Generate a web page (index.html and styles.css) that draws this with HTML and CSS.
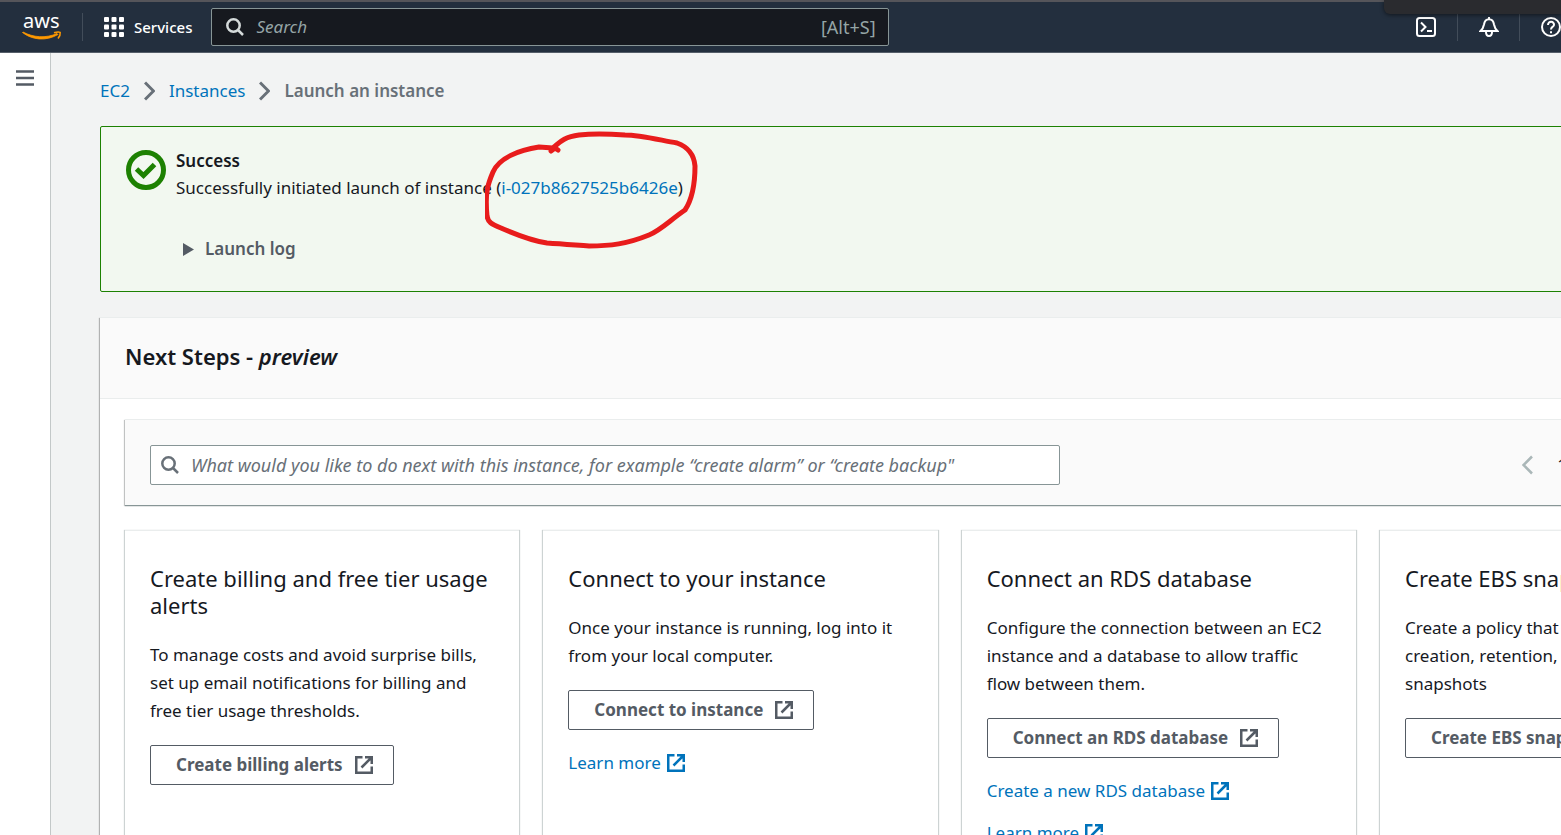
FILE: index.html
```html
<!DOCTYPE html>
<html lang="en">
<head>
<meta charset="utf-8">
<title>Launch an instance | EC2</title>
<link rel="stylesheet" href="styles.css">
</head>
<body>
<svg class="sprite" aria-hidden="true">
  <symbol id="external" viewBox="0 0 18 18"><path d="M7.500 1.250H1.250V16.750H16.750V10.500" /><path d="M10 1.250H16.750V8M16.500 1.500L6.500 11.500" /></symbol>
  <symbol id="search" viewBox="0 0 18 18"><circle cx="7.500" cy="7.500" r="6.200" /><path d="M12 12L17 17" /></symbol>
  <symbol id="chevron" viewBox="0 0 11 20"><path d="M1 1.500L9.500 10L1 18.500" /></symbol>
</svg>
<header class="topbar">
  <a class="logo" href="#" aria-label="AWS home">
    <svg width="40" height="32" viewBox="0 -4 40 32"><text x="1" y="13" class="logo-text">aws</text><path d="M.5 17.500C10 25 24 26.500 36 19.500L35 18.500C24 23.500 11 22.500 1 17Z" fill="#ff9900" stroke="#ff9900" stroke-width=".8"/><path d="M32 17.800C35 16.800 37 16.800 38.200 17.400C38.500 19.200 37.500 21.700 36 23.500" fill="none" stroke="#ff9900" stroke-width="1.500"/></svg>
  </a>
  <span class="rule"></span>
  <button class="services" type="button">
    <svg class="grid-icon" width="20" height="20" viewBox="0 0 20 20"><rect width="5" height="5" rx="1"/><rect x="7.500" width="5" height="5" rx="1"/><rect x="15" width="5" height="5" rx="1"/><rect y="7.500" width="5" height="5" rx="1"/><rect x="7.500" y="7.500" width="5" height="5" rx="1"/><rect x="15" y="7.500" width="5" height="5" rx="1"/><rect y="15" width="5" height="5" rx="1"/><rect x="7.500" y="15" width="5" height="5" rx="1"/><rect x="15" y="15" width="5" height="5" rx="1"/></svg>
    Services
  </button>
  <label class="global-search">
    <svg class="icon"><use href="#search"/></svg>
    <input type="search" placeholder="Search" aria-label="Search">
    <span class="shortcut">[Alt+S]</span>
  </label>
  <nav class="actions" aria-label="Tools">
    <button type="button" aria-label="CloudShell"><svg width="20" height="20" viewBox="0 0 20 20"><rect x="1" y="1" width="18" height="18" rx="2.500"/><path d="M5 5.500L9.500 10L5 14.500M11 14H16"/></svg></button>
    <button type="button" aria-label="Notifications"><svg width="20" height="20" viewBox="0 0 20 20"><path d="M1.500 14H18.500C16 12 15.500 10 15 7.500C14.500 4 12.500 2.300 10 2.300S5.500 4 5 7.500C4.500 10 4 12 1.500 14ZM10 2.300V0M7 15C7 17.500 8 19 10 19S13 17.500 13 15"/></svg></button>
    <button type="button" aria-label="Help"><svg width="20" height="20" viewBox="0 0 20 20"><circle cx="10" cy="10" r="9"/><path d="M7 8C7 3.500 13.500 4 13 8C12.800 9.800 10 9.600 10 12.500M10 14.200V16.200"/></svg></button>
  </nav>
  <div class="screen-bar"></div>
</header>
<div class="shell">
  <aside class="side"><button type="button" aria-label="Open navigation"><svg width="18" height="16" viewBox="0 0 18 16"><path d="M0 1.500H18M0 8H18M0 14.500H18"/></svg></button></aside>
  <main class="main">
    <nav class="crumbs" aria-label="Breadcrumbs">
      <a href="#">EC2</a><svg class="chev"><use href="#chevron"/></svg><a href="#">Instances</a><svg class="chev"><use href="#chevron"/></svg><strong>Launch an instance</strong>
    </nav>
    <section class="alert">
      <svg class="ok" width="40" height="40" viewBox="0 0 40 40"><circle cx="20" cy="20" r="17.500" stroke-width="5"/><path d="M10.500 19L17.500 25.500L28.500 14.500" stroke-width="5"/></svg>
      <div class="alert-body">
        <h2>Success</h2>
        <p>Successfully initiated launch of instance (<a href="#">i-027b8627525b6426e</a>)</p>
        <button class="log" type="button"><svg width="11" height="13" viewBox="0 0 11 13"><path d="M0 0L11 6.500L0 13Z"/></svg>Launch log</button>
      </div>
      <svg class="scribble" width="216" height="122" viewBox="0 0 216 122"><path d="M73 20L70 18L66 21L68 18L54 17C34 20 14 28 8 42C2 56 0 64 2 86C3 92 6 94 16 98C32 105 48 111 62 113C78 114 90 115 104 116C125 116 142 114 164 105C176 100 184 91 200 80C208 68 210 51 210 36C209 24 203 17 192 13C170 9 154 5 140 5C124 4 104 4 94 5C78 7 74 13 69 17" /></svg>
    </section>
    <section class="panel">
      <header class="panel-head"><h1>Next Steps - <em>preview</em></h1></header>
      <div class="panel-body">
        <div class="toolbar">
          <label class="find"><svg class="icon"><use href="#search"/></svg><input type="search" aria-label="Find next step" placeholder="What would you like to do next with this instance, for example “create alarm” or “create backup&quot;"></label>
          <div class="pager"><button type="button" aria-label="Previous page"><svg class="chev back"><use href="#chevron"/></svg></button><span>1</span></div>
        </div>
        <div class="cards">
          <article class="card">
            <h3>Create billing and free tier usage alerts</h3>
            <p>To manage costs and avoid surprise bills, set up email notifications for billing and free tier usage thresholds.</p>
            <button class="btn" type="button">Create billing alerts <svg class="icon"><use href="#external"/></svg></button>
          </article>
          <article class="card">
            <h3>Connect to your instance</h3>
            <p>Once your instance is running, log into it from your local computer.</p>
            <button class="btn" type="button">Connect to instance <svg class="icon"><use href="#external"/></svg></button>
            <a class="more" href="#">Learn more <svg class="icon"><use href="#external"/></svg></a>
          </article>
          <article class="card">
            <h3>Connect an RDS database</h3>
            <p>Configure the connection between an EC2 instance and a database to allow traffic flow between them.</p>
            <button class="btn" type="button">Connect an RDS database <svg class="icon"><use href="#external"/></svg></button>
            <a class="more" href="#">Create a new RDS database <svg class="icon"><use href="#external"/></svg></a>
            <a class="more" href="#">Learn more <svg class="icon"><use href="#external"/></svg></a>
          </article>
          <article class="card">
            <h3>Create EBS snapshot policy</h3>
            <p>Create a policy that automates the creation, retention, and deletion of EBS snapshots</p>
            <button class="btn" type="button">Create EBS snapshot policy <svg class="icon"><use href="#external"/></svg></button>
          </article>
        </div>
      </div>
    </section>
  </main>
</div>
</body>
</html>
```
FILE: styles.css
```css
* { box-sizing: border-box; }
html, body { height: 100%; }
body { margin: 0; overflow: hidden; display: flex; flex-direction: column; background: #f2f3f3; color: #16191f; font: 17px/28px "Noto Sans", sans-serif; }
h1, h2, h3, p { margin: 0; }
a { color: #0073bb; text-decoration: none; }
button, input { font: inherit; color: inherit; background: none; border: 0; padding: 0; margin: 0; }
input { outline: 0; min-width: 0; flex: 1; }
svg { display: block; flex: none; fill: none; }
.sprite { position: absolute; width: 0; height: 0; }
.icon { width: 18px; height: 18px; stroke: currentColor; stroke-width: 2.5; }
.chev { width: 11px; height: 20px; stroke: #687078; stroke-width: 3; }

.topbar { position: relative; flex: none; display: flex; align-items: center; height: 53px; padding-left: 22px; background: #232f3e; color: #fff; border-top: 2px solid #55555a; border-bottom: 1px solid #555e69; }
.logo-text { font: 400 20px "Noto Sans", sans-serif; fill: #fff; }
.rule { width: 1px; height: 28px; margin: 0 21px 0 20px; background: #424d5a; }
.services { display: flex; align-items: center; gap: 10px; font-size: 15px; font-weight: 500; }
.grid-icon { fill: #fff; }
.global-search { display: flex; align-items: center; gap: 12px; width: 44%; height: 38px; margin-left: 19px; padding: 0 12px 0 14px; background: #16191f; border: 1px solid #879596; border-radius: 2px; }
.global-search .icon { stroke: #d5dbdb; }
.global-search input::placeholder { color: #95a5a6; opacity: 1; font-style: italic; }
.shortcut { color: #95a5a6; font-size: 18px; }
.actions { display: flex; margin: 0 -20px 0 auto; }
.actions button { display: grid; place-items: center; width: 62px; height: 28px; border-left: 1px solid #424d5a; }
.actions button:first-child { border-left: 0; }
.actions svg { stroke: #fff; stroke-width: 2; }
.screen-bar { position: absolute; top: -2px; right: 0; width: 177px; height: 14px; background: #2a2b2f; border-bottom-left-radius: 6px; box-shadow: 0 1px 4px #0008; }

.shell { display: flex; flex: 1; min-height: 0; }
.side { flex: none; width: 51px; padding: 17px 16px; background: #fff; border-right: 1px solid #c3c8c8; }
.side button { display: block; }
.side svg { stroke: #545b64; stroke-width: 2.4; }
.main { flex: none; width: 112%; padding: 24px 0 0 49px; }
.crumbs { display: flex; align-items: center; gap: 14px; margin-bottom: 21px; }
.crumbs strong { color: #687078; font-weight: 600; }

.alert { position: relative; display: flex; gap: 10px; height: 166px; padding: 20px 25px; background: #f2f8f0; border: 1px solid #1d8102; border-radius: 2px; }
.ok { margin-top: 3px; stroke: #1d8102; }
.alert h2 { font: inherit; font-weight: 600; }
.alert-body p { line-height: 26px; }
.log { display: flex; align-items: center; gap: 11px; margin: 34px 0 0 7px; color: #545b64; font-weight: 600; }
.log svg { fill: #545b64; }
.scribble { position: absolute; left: 384px; top: 3px; stroke: #e81c1c; stroke-width: 5; stroke-linecap: round; stroke-linejoin: round; }

.panel { margin-top: 25px; background: #fff; border-top: 1px solid #eaeded; box-shadow: -1px 1px 1px #0004; }
.panel-head { padding: 24px 25px; height: 81px; background: #fafafa; border-bottom: 1px solid #eaeded; }
h1 { font-size: 22px; font-weight: 600; line-height: 28px; }
.panel-body { padding: 20px 25px 0; }
.toolbar { display: flex; align-items: center; justify-content: space-between; padding: 25px 25px 20px; background: #fafafa; border-top: 1px solid #eaeded; box-shadow: 0 1px 1px #879596, -1px 1px 1px #0003; }
.find { display: flex; align-items: center; gap: 12px; flex: 0 0 910px; height: 40px; padding: 0 10px; background: #fff; border: 1px solid #879596; border-radius: 2px; color: #687078; font-size: 18px; }
.find input::placeholder { color: #687078; opacity: 1; font-style: italic; }
.pager { display: flex; align-items: center; gap: 24px; width: 227px; }
.pager .back { transform: scaleX(-1); stroke: #aab7b8; stroke-width: 2.5; }
.cards { display: grid; grid-template-columns: repeat(4, 1fr); gap: 24px; margin-top: 25px; }
.card { display: flex; flex-direction: column; align-items: flex-start; min-height: 340px; padding: 34px 25px; border-top: 1px solid #eaeded; box-shadow: 0 1px 1px 1px #cdd3d3; }
.card h3 { font-size: 22px; font-weight: 400; line-height: 27px; }
.card p { margin: 22px 0 20px; }
.btn { display: flex; align-items: center; gap: 12px; height: 40px; padding: 0 20px 0 25px; border: 1px solid #545b64; border-radius: 2px; color: #545b64; font-weight: 700; white-space: nowrap; }
.more { display: flex; align-items: center; gap: 6px; margin-top: 19px; }
.more + .more { margin-top: 14px; }
```
